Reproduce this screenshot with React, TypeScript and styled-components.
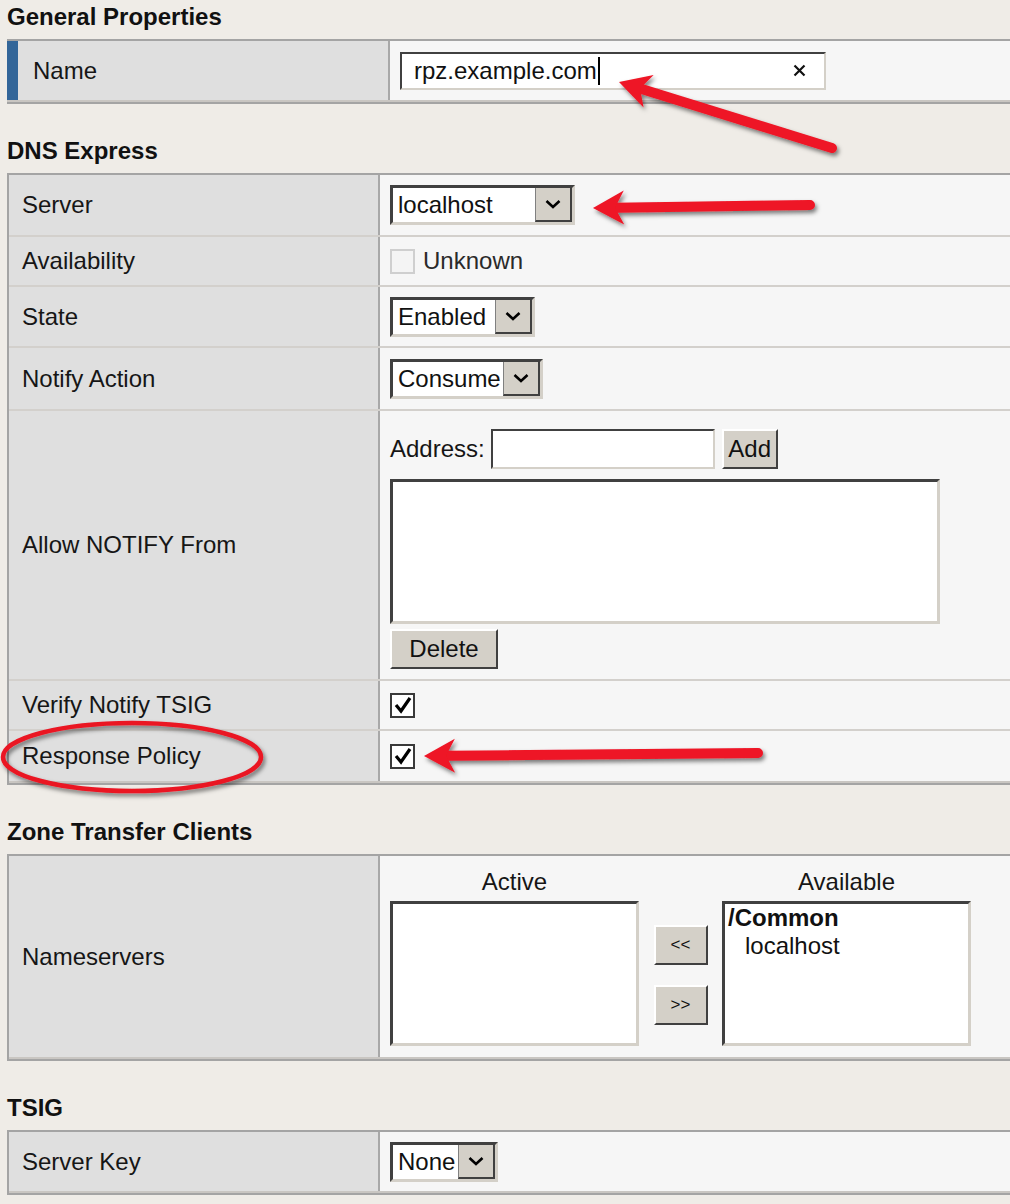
import React from "react";
import styled, { createGlobalStyle } from "styled-components";

const GlobalStyle = createGlobalStyle`
  html, body { margin: 0; padding: 0; background: #efece7; }
  body { font-family: "Liberation Sans", Arial, sans-serif; color: #151515; overflow: hidden; }
  * { box-sizing: border-box; }
`;

const Page = styled.div`
  position: relative;
  width: 1010px;
  height: 1204px;
  overflow: hidden;
  padding: 3px 0 0 7px;
`;

const Section = styled.section`
  width: 1040px;
  & + & { margin-top: 33px; }
`;

const Heading = styled.h2`
  margin: 0 0 8px;
  font-size: 24px;
  font-weight: bold;
  line-height: 28px;
  color: #111;
`;

const Table = styled.div<{ $edge?: boolean }>`
  display: flex;
  flex-direction: column;
  border-top: 2px solid #a4a4a4;
  border-bottom: 2px solid #a4a4a4;
  border-left: ${(p) => (p.$edge ? "none" : "2px solid #a4a4a4")};
`;

const Row = styled.div<{ $h: number; $label: number }>`
  display: grid;
  grid-template-columns: ${(p) => p.$label}px 1fr;
  height: ${(p) => p.$h}px;
  border-bottom: 2px solid #d3d0cc;
  &:last-child { border-bottom: 2px solid #c9c6c2; }
`;

const LabelCell = styled.div<{ $accent?: boolean }>`
  display: flex;
  align-items: center;
  background: #dfdfdf;
  border-right: 2px solid #a8a8a8;
  border-left: ${(p) => (p.$accent ? "11px solid #336699" : "none")};
  padding-left: ${(p) => (p.$accent ? 15 : 13)}px;
  font-size: 24px;
  color: #161616;
  white-space: nowrap;
`;

const ValueCell = styled.div<{ $top?: number }>`
  display: flex;
  align-items: center;
  background: #f6f6f6;
  padding-left: 10px;
  padding-top: ${(p) => p.$top ?? 0}px;
  font-size: 24px;
`;

const TextBox = styled.div<{ $w: number; $h: number }>`
  display: flex;
  align-items: center;
  width: ${(p) => p.$w}px;
  height: ${(p) => p.$h}px;
  background: #fff;
  border-top: 2px solid #404040;
  border-left: 2px solid #404040;
  border-right: 2px solid #d4d0c8;
  border-bottom: 2px solid #d4d0c8;
  font-size: 24px;
  color: #111;
`;

const NameText = styled.span`
  padding-left: 12px;
  display: flex;
  align-items: center;
`;

const Caret = styled.span`
  display: inline-block;
  width: 2px;
  height: 28px;
  background: #000;
  margin-left: 1px;
`;

const ClearIcon = styled.svg`
  margin-left: auto;
  margin-right: 18px;
`;

const SelectBox = styled.div<{ $w: number }>`
  display: flex;
  align-items: stretch;
  width: ${(p) => p.$w}px;
  height: 40px;
  background: #fff;
  border-top: 3px solid #404040;
  border-left: 3px solid #404040;
  border-right: 3px solid #d4d0c8;
  border-bottom: 3px solid #d4d0c8;
`;

const SelectText = styled.span`
  flex: 1;
  display: flex;
  align-items: center;
  padding-left: 5px;
  font-size: 24px;
  color: #111;
  white-space: nowrap;
  overflow: hidden;
`;

const DropButton = styled.span`
  width: 37px;
  display: flex;
  align-items: center;
  justify-content: center;
  background: #d4d0c8;
  border-left: 1px solid #808080;
  border-right: 2px solid #404040;
  border-bottom: 2px solid #404040;
`;

const CheckBox = styled.span<{ $disabled?: boolean }>`
  width: 25px;
  height: 25px;
  display: inline-flex;
  align-items: center;
  justify-content: center;
  background: ${(p) => (p.$disabled ? "#f4f4f4" : "#fff")};
  border: 2px solid ${(p) => (p.$disabled ? "#cfcfcf" : "#3a3a3a")};
`;

const CheckLabel = styled.span`
  margin-left: 8px;
  color: #2a2a2a;
`;

const Button = styled.span<{ $w: number; $small?: boolean }>`
  display: inline-flex;
  align-items: center;
  justify-content: center;
  width: ${(p) => p.$w}px;
  height: 40px;
  background: #d4d0c8;
  border-top: 2px solid #fff;
  border-left: 2px solid #fff;
  border-right: 2px solid #404040;
  border-bottom: 2px solid #404040;
  font-size: ${(p) => (p.$small ? 17 : 24)}px;
  color: #111;
`;

const AllowBlock = styled.div`
  display: flex;
  flex-direction: column;
  align-items: flex-start;
`;

const AddressLine = styled.div`
  display: flex;
  align-items: center;
  gap: 6px;
  & > ${Button} { margin-left: 1px; }
`;

const ListArea = styled.div<{ $w: number; $h: number }>`
  width: ${(p) => p.$w}px;
  height: ${(p) => p.$h}px;
  background: #fff;
  border-top: 3px solid #404040;
  border-left: 3px solid #404040;
  border-right: 3px solid #d4d0c8;
  border-bottom: 3px solid #d4d0c8;
  padding: 0 0 0 5px;
  font-size: 24px;
  line-height: 28px;
  color: #111;
`;

const Shuttle = styled.div`
  display: grid;
  grid-template-columns: 249px 83px 249px;
  align-items: end;
`;

const ShuttleCol = styled.div`
  display: flex;
  flex-direction: column;
  align-items: center;
  gap: 5px;
`;

const Caption = styled.div`
  font-size: 24px;
  line-height: 28px;
  color: #161616;
`;

const MoveButtons = styled.div`
  height: 145px;
  display: flex;
  flex-direction: column;
  align-items: center;
  justify-content: center;
  gap: 20px;
  padding-top: 3px;
`;

const GroupItem = styled.div`
  font-weight: bold;
  margin-left: -2px;
`;

const ChildItem = styled.div`
  padding-left: 15px;
`;

const Overlay = styled.svg`
  position: absolute;
  top: 0;
  left: 0;
  pointer-events: none;
`;

const Chevron = () => (
  <svg width="16" height="10" viewBox="0 0 16 10">
    <polyline points="1.5,2 8,8 14.5,2" fill="none" stroke="#000" strokeWidth="2.6" />
  </svg>
);

const Check = () => (
  <svg width="20" height="20" viewBox="0 0 20 20">
    <polyline points="3,10 8,16 17,3" fill="none" stroke="#000" strokeWidth="3.2" strokeLinejoin="miter" />
  </svg>
);

const Select = ({ w, value }: { w: number; value: string }) => (
  <SelectBox $w={w}>
    <SelectText>{value}</SelectText>
    <DropButton>
      <Chevron />
    </DropButton>
  </SelectBox>
);

type P = [number, number];

const Arrow = ({ tip, tail }: { tip: P; tail: P }) => {
  const dx = tail[0] - tip[0];
  const dy = tail[1] - tip[1];
  const L = Math.hypot(dx, dy);
  const ux = dx / L;
  const uy = dy / L;
  const nx = -uy;
  const ny = ux;
  const headLen = 31;
  const half = 17;
  const notch = 22;
  const c1: P = [tip[0] + headLen * ux + half * nx, tip[1] + headLen * uy + half * ny];
  const c2: P = [tip[0] + headLen * ux - half * nx, tip[1] + headLen * uy - half * ny];
  const nt: P = [tip[0] + notch * ux, tip[1] + notch * uy];
  const pts = [tip, c1, nt, c2].map((p) => p.join(",")).join(" ");
  return (
    <g filter="url(#shadow)">
      <line x1={nt[0]} y1={nt[1]} x2={tail[0]} y2={tail[1]} stroke="#ee1425" strokeWidth="10" strokeLinecap="round" />
      <polygon points={pts} fill="#ee1425" />
    </g>
  );
};

const DNS_LABEL = 371;

export default function App() {
  return (
    <>
      <GlobalStyle />
      <Page>
        <Section>
          <Heading>General Properties</Heading>
          <Table $edge>
            <Row $h={61} $label={383}>
              <LabelCell $accent>Name</LabelCell>
              <ValueCell>
                <TextBox $w={426} $h={38}>
                  <NameText>
                    rpz.example.com
                    <Caret />
                  </NameText>
                  <ClearIcon width="13" height="13" viewBox="0 0 13 13">
                    <path d="M1.5 1.5 L11.5 11.5 M11.5 1.5 L1.5 11.5" stroke="#111" strokeWidth="2.2" />
                  </ClearIcon>
                </TextBox>
              </ValueCell>
            </Row>
          </Table>
        </Section>

        <Section>
          <Heading>DNS Express</Heading>
          <Table>
            <Row $h={62} $label={DNS_LABEL}>
              <LabelCell>Server</LabelCell>
              <ValueCell>
                <Select w={185} value="localhost" />
              </ValueCell>
            </Row>
            <Row $h={50} $label={DNS_LABEL}>
              <LabelCell>Availability</LabelCell>
              <ValueCell>
                <CheckBox $disabled />
                <CheckLabel>Unknown</CheckLabel>
              </ValueCell>
            </Row>
            <Row $h={61} $label={DNS_LABEL}>
              <LabelCell>State</LabelCell>
              <ValueCell>
                <Select w={145} value="Enabled" />
              </ValueCell>
            </Row>
            <Row $h={63} $label={DNS_LABEL}>
              <LabelCell>Notify Action</LabelCell>
              <ValueCell>
                <Select w={153} value="Consume" />
              </ValueCell>
            </Row>
            <Row $h={270} $label={DNS_LABEL}>
              <LabelCell>Allow NOTIFY From</LabelCell>
              <ValueCell $top={8}>
                <AllowBlock>
                  <AddressLine>
                    <span>Address:</span>
                    <TextBox $w={224} $h={40} />
                    <Button $w={56}>Add</Button>
                  </AddressLine>
                  <ListArea $w={550} $h={145} style={{ marginTop: 10 }} />
                  <Button $w={108} style={{ marginTop: 5 }}>
                    Delete
                  </Button>
                </AllowBlock>
              </ValueCell>
            </Row>
            <Row $h={50} $label={DNS_LABEL}>
              <LabelCell>Verify Notify TSIG</LabelCell>
              <ValueCell>
                <CheckBox>
                  <Check />
                </CheckBox>
              </ValueCell>
            </Row>
            <Row $h={52} $label={DNS_LABEL}>
              <LabelCell>Response Policy</LabelCell>
              <ValueCell>
                <CheckBox>
                  <Check />
                </CheckBox>
              </ValueCell>
            </Row>
          </Table>
        </Section>

        <Section>
          <Heading>Zone Transfer Clients</Heading>
          <Table>
            <Row $h={203} $label={DNS_LABEL}>
              <LabelCell>Nameservers</LabelCell>
              <ValueCell>
                <Shuttle>
                  <ShuttleCol>
                    <Caption>Active</Caption>
                    <ListArea $w={249} $h={145} />
                  </ShuttleCol>
                  <MoveButtons>
                    <Button $w={54} $small>
                      &lt;&lt;
                    </Button>
                    <Button $w={54} $small>
                      &gt;&gt;
                    </Button>
                  </MoveButtons>
                  <ShuttleCol>
                    <Caption>Available</Caption>
                    <ListArea $w={249} $h={145}>
                      <GroupItem>/Common</GroupItem>
                      <ChildItem>localhost</ChildItem>
                    </ListArea>
                  </ShuttleCol>
                </Shuttle>
              </ValueCell>
            </Row>
          </Table>
        </Section>

        <Section>
          <Heading>TSIG</Heading>
          <Table>
            <Row $h={61} $label={DNS_LABEL}>
              <LabelCell>Server Key</LabelCell>
              <ValueCell>
                <Select w={108} value="None" />
              </ValueCell>
            </Row>
          </Table>
        </Section>

        <Overlay width="1010" height="1204" viewBox="0 0 1010 1204">
          <defs>
            <filter id="shadow" x="-20%" y="-50%" width="140%" height="200%">
              <feDropShadow dx="2" dy="3" stdDeviation="2" floodColor="#000" floodOpacity="0.5" />
            </filter>
          </defs>
          <Arrow tip={[619, 82]} tail={[832, 148]} />
          <Arrow tip={[593, 208]} tail={[810, 205]} />
          <Arrow tip={[424, 756]} tail={[758, 753]} />
          <ellipse
            cx="132"
            cy="757"
            rx="129"
            ry="34"
            fill="none"
            stroke="#ea1423"
            strokeWidth="4.5"
            filter="url(#shadow)"
          />
        </Overlay>
      </Page>
    </>
  );
}
